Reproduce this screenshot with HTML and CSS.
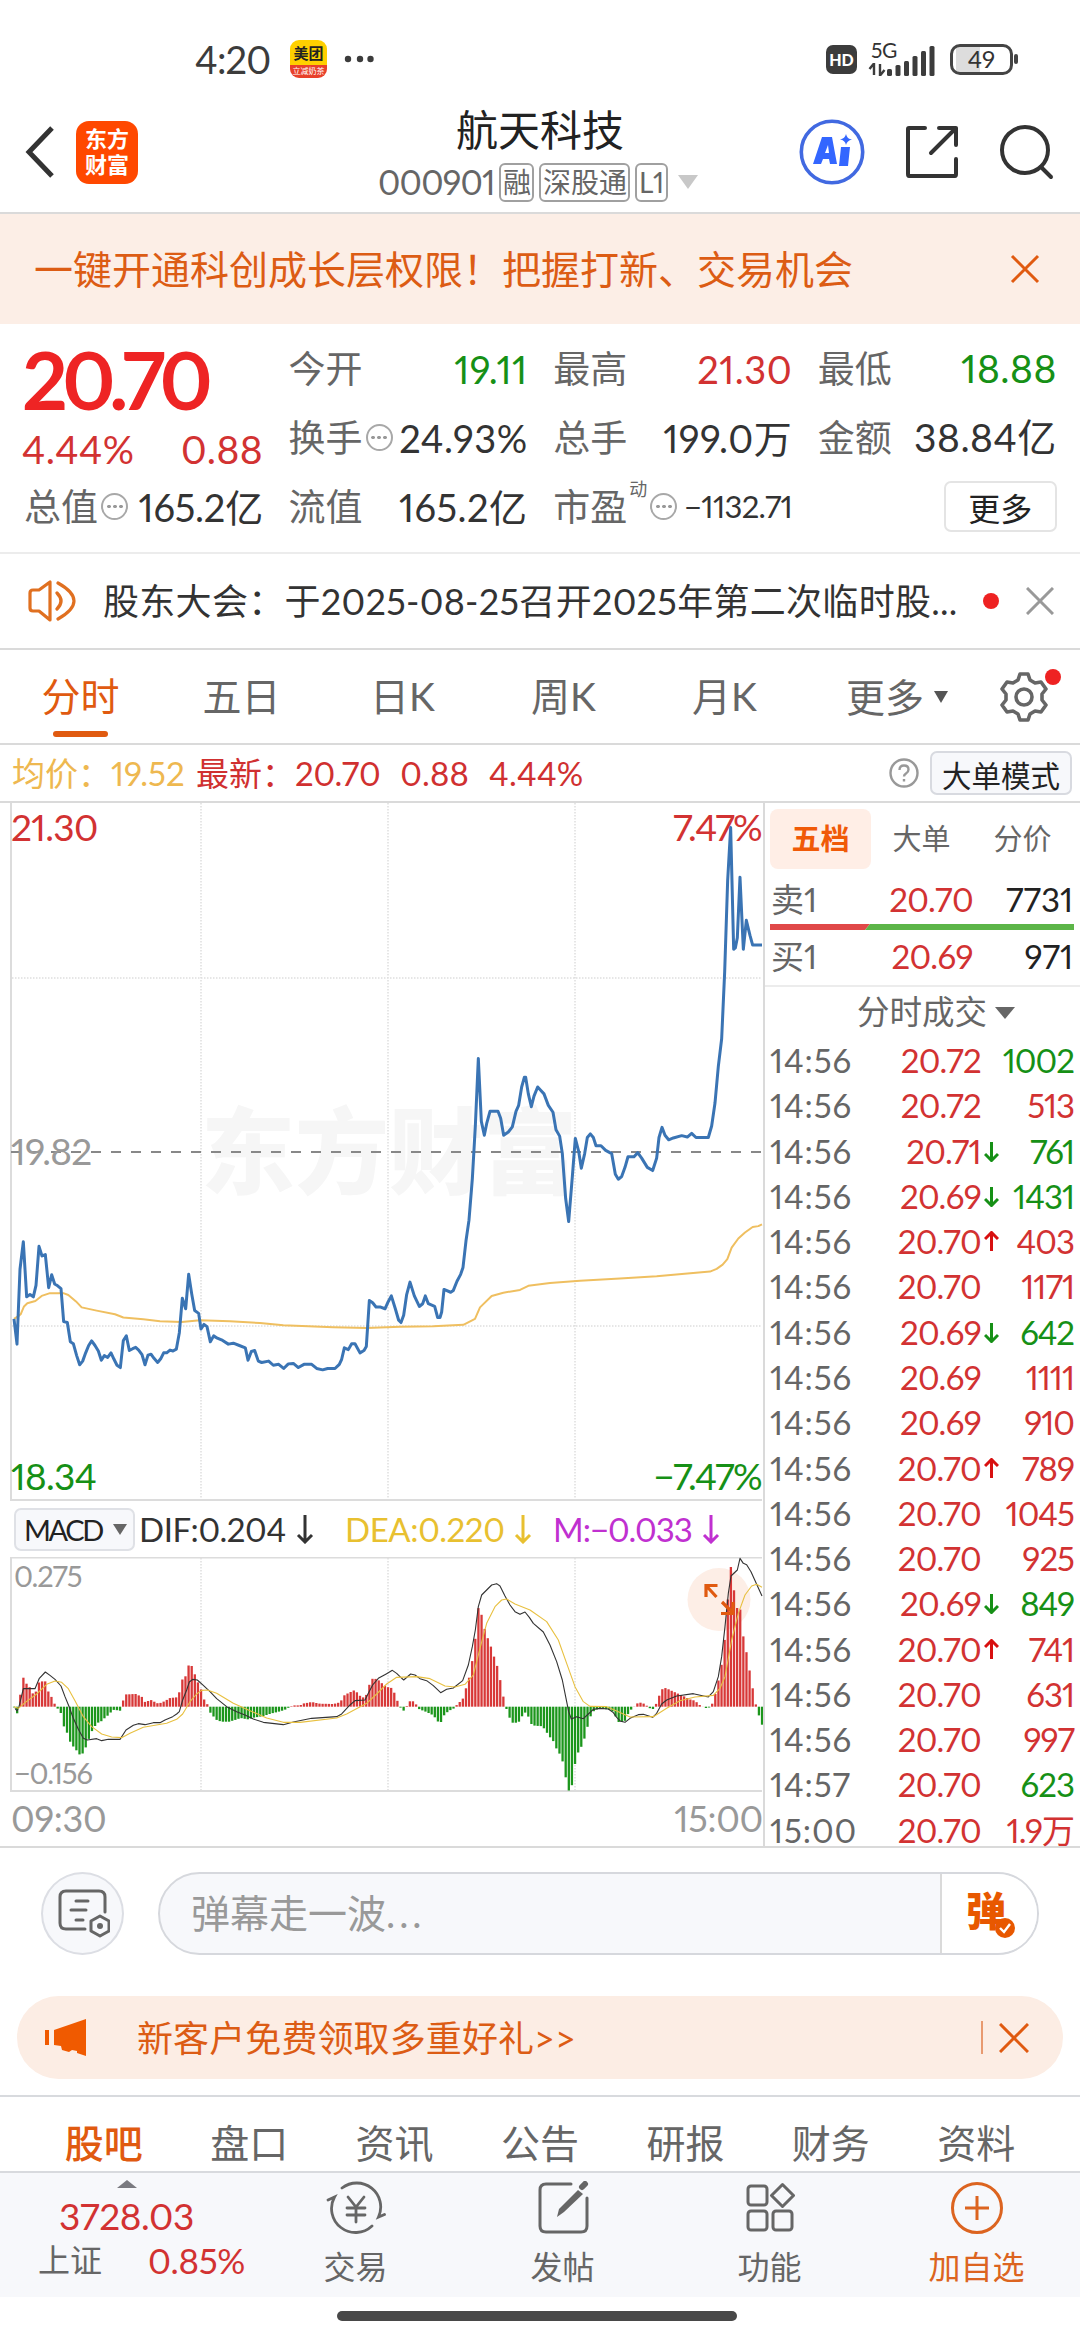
FILE: index.html
```html
<!DOCTYPE html>
<html lang="zh-CN">
<head>
  <meta charset="UTF-8" />
  <meta name="viewport" content="width=device-width, initial-scale=1.0" />
  <title>航天科技 000901</title>
  <link rel="stylesheet" href="styles.css">
</head>

<body>
  <!-- Status bar -->
  <div class="status-bar">
    <div class="status-left">
      <span class="clock">4:20</span>
      <div class="meituan"><b>美团</b><i>立减奶茶</i></div>
      <svg width="30" height="8" viewBox="0 0 30 8" fill="#3c3c3c"><circle cx="4" cy="4" r="3.2"/><circle cx="16" cy="4" r="3.2"/><circle cx="28" cy="4" r="3.2" transform="translate(-1.5 0)"/></svg>
    </div>
    <div class="status-right">
      <span class="hd">HD</span>
      <div class="signal">
        <span class="net">5G</span>
        <svg width="70" height="36" viewBox="0 0 70 36" fill="#3c3c3c">
          <path d="M6 22v12M5.500 23l-4 5M12 23v12M12.500 34l4-5" fill="none" stroke="#3c3c3c" stroke-width="2.400"/>
          <rect x="19" y="28" width="5" height="7" rx="1.500"/><rect x="27.500" y="24" width="5" height="11" rx="1.500"/><rect x="36" y="20" width="5" height="15" rx="1.500"/><rect x="44.500" y="15" width="5" height="20" rx="1.500"/><rect x="53" y="10" width="5" height="25" rx="1.500"/><rect x="61.500" y="5" width="5" height="30" rx="1.500"/>
        </svg>
      </div>
      <div class="battery"><span>49</span></div>
      <div class="battery-tip"></div>
    </div>
  </div>

  <!-- Title bar -->
  <header>
    <div class="head-left">
      <svg width="30" height="52" viewBox="0 0 30 52" fill="none" stroke="#333" stroke-width="5"><path d="M27 2 4 26l23 24"/></svg>
      <div class="app-logo">东方<br>财富</div>
    </div>
    <div class="head-title">
      <h1>航天科技</h1>
      <div class="code-line">
        <span class="code">000901</span>
        <span class="tag">融</span>
        <span class="tag">深股通</span>
        <span class="tag level-tag">L1</span>
        <svg width="20" height="14" viewBox="0 0 20 14" fill="#c8c8c8"><path d="M0 0h20L10 14z"/></svg>
      </div>
    </div>
    <div class="head-right">
      <svg width="66" height="66" viewBox="0 0 66 66">
        <circle cx="33" cy="33" r="30.700" fill="none" stroke="#4169e1" stroke-width="3.600"/>
        <path d="M23 18h10l5 27h-7l-1-5h-6l-2 5h-8zM26 34h4l-1-8z" fill="#3366ff" fill-rule="evenodd"/>
        <path d="M42 28h9l-2 19h-9zM47 15q1 5 6 5.500-5 1-6 5.500-1-5-6-5.500 5-1 6-5.500z" fill="#3366ff"/>
      </svg>
      <svg width="54" height="54" viewBox="0 0 54 54" fill="none" stroke="#333" stroke-width="4" stroke-linecap="round" stroke-linejoin="round"><path d="M20 3H4q-1 0-1 1v45q0 2 1 2h46q1 0 1-2V34M34 3h17v17M51 3 26 28"/></svg>
      <svg width="56" height="56" viewBox="0 0 56 56" fill="none" stroke="#333" stroke-width="4" stroke-linecap="round"><circle cx="26" cy="26" r="23"/><path d="m42 43 10 10"/></svg>
    </div>
  </header>

  <div class="banner">
    <span>一键开通科创成长层权限！把握打新、交易机会</span>
    <svg width="30" height="30" viewBox="0 0 30 30" stroke="#e05a10" stroke-width="3"><path d="m2 2 26 26M28 2 2 28"/></svg>
  </div>

  <!-- Quote summary -->
  <section class="quote">
    <div class="price-box">
      <div class="price">20.70</div>
      <div class="change"><span>4.44%</span><span>0.88</span></div>
    </div>
    <div class="cell"><label>今开</label><span class="num green">19.11</span></div>
    <div class="cell"><label>最高</label><span class="num red">21.30</span></div>
    <div class="cell"><label>最低</label><span class="num wide green">18.88</span></div>
    <div class="cell"><label>换手</label><i class="info"></i><span class="num">24.93%</span></div>
    <div class="cell"><label>总手</label><span class="num">199.0万</span></div>
    <div class="cell"><label>金额</label><span class="num wide">38.84亿</span></div>
    <div class="cell"><label>总值</label><i class="info"></i><span class="num tight">165.2亿</span></div>
    <div class="cell"><label>流值</label><span class="num">165.2亿</span></div>
    <div class="cell"><label>市盈</label><sup>动</sup><i class="info"></i><span class="num small">−1132.71</span></div>
    <div class="cell"><button class="more-btn">更多</button></div>
  </section>

  <div class="news">
    <svg width="48" height="42" viewBox="0 0 48 42" fill="none" stroke="#e07020" stroke-width="3.200" stroke-linecap="round" stroke-linejoin="round"><path d="M2 13q0-3 3-3h6L22 2v38l-11-9H5q-3 0-3-3zM29 13q8 8 0 16M30 3q32 18 0 36"/></svg>
    <span class="news-text">股东大会：于2025-08-25召开2025年第二次临时股...</span>
    <i class="dot"></i>
    <svg width="28" height="28" viewBox="0 0 28 28" stroke="#999" stroke-width="3"><path d="m1 1 26 26M27 1 1 27"/></svg>
  </div>

  <nav class="chart-tabs">
    <a class="active">分时</a>
    <a>五日</a>
    <a>日K</a>
    <a>周K</a>
    <a>月K</a>
    <a class="more">更多<svg width="14" height="12" viewBox="0 0 14 12" fill="#555"><path d="M0 0h14L7 12z"/></svg></a>
    <div class="gear">
      <svg width="50" height="52" viewBox="0 0 50 52" fill="none" stroke="#666" stroke-width="3.600" stroke-linejoin="round"><path d="M21 3h8l2 6 5 3 6-1 5 7-4 5v6l4 5-5 7-6-1-5 3-2 6h-8l-2-6-5-3-6 1-5-7 4-5v-6l-4-5 5-7 6 1 5-3z"/><circle cx="25" cy="26" r="8"/></svg>
      <i class="dot"></i>
    </div>
  </nav>

  <div class="latest">
    <span class="avg">均价：<b>19.52</b></span>
    <span class="last">最新：<b>20.70</b><b>0.88</b><b>4.44%</b></span>
    <svg class="help" width="30" height="30" viewBox="0 0 30 30" fill="none" stroke="#999" stroke-width="2.400"><circle cx="15" cy="15" r="13.500"/><path d="M10.500 12q0-4.500 4.500-4.500t4.500 4q0 2.500-2.500 4-2 1.200-2 3M15 21v2.500"/></svg>
    <button class="mode-btn">大单模式</button>
  </div>

  <main>
    <div class="charts">
      <!-- Intraday price -->
      <svg class="price-chart" width="763" height="698" viewBox="0 3 763 698">
        <text class="watermark" x="201" y="387">东方财富</text>
        <path class="dotted" d="M201 3v697M388 3v697M575 3v697M12 178h750M12 526h750"/>
        <path class="frame" d="M11 3v697h751"/>
        <path class="mid" d="M11 352h751"/>
        <text class="t-red" x="11" y="41">21.30</text>
        <text class="t-red end" x="761" y="41">7.47%</text>
        <text class="t-gray" x="11" y="365">19.82</text>
        <text class="t-green" x="11" y="690">18.34</text>
        <text class="t-green end" x="761" y="690">−7.47%</text>
        <g transform="scale(.33333 .45918)">
          <polyline class="avg-line" points="42,1130 55,1124 62,1120 72,1103 82,1096 106,1091 125,1080 150,1074 190,1074 205,1078 228,1092 245,1105 290,1112 345,1120 370,1127 430,1131 480,1135 545,1137 600,1133 690,1135 780,1139 850,1144 1000,1148 1100,1150 1200,1147 1300,1146 1390,1143 1425,1130 1440,1105 1475,1080 1510,1073 1560,1067 1585,1058 1650,1052 1740,1047 1860,1042 1970,1037 2130,1027 2150,1021 2168,1012 2182,1000 2195,975 2215,955 2235,942 2258,930 2275,928 2286,924"/>
          <polyline class="price-line" points="42,1130 51,1185 60,1022 70,962 80,1082 90,1077 100,1082 108,1057 117,972 126,993 136,990 146,1062 155,1034 164,1054 173,1058 183,1064 191,1136 202,1138 211,1180 220,1184 230,1210 239,1230 248,1222 257,1204 266,1188 275,1178 285,1188 295,1200 304,1220 313,1210 323,1214 333,1204 342,1218 351,1231 361,1236 370,1177 379,1167 388,1199 398,1195 407,1192 416,1198 426,1208 435,1230 444,1209 453,1207 462,1216 473,1225 482,1217 491,1204 500,1204 510,1198 519,1200 529,1196 538,1160 547,1085 557,1108 566,1033 575,1075 584,1112 596,1118 603,1152 612,1142 621,1147 631,1180 641,1167 652,1172 668,1177 685,1185 700,1183 718,1188 736,1193 744,1220 754,1201 764,1199 775,1222 785,1225 806,1222 820,1231 836,1229 851,1238 865,1228 880,1227 895,1236 912,1229 935,1229 950,1238 968,1241 983,1238 1005,1238 1018,1229 1025,1218 1033,1193 1045,1197 1055,1184 1065,1184 1080,1204 1092,1199 1099,1190 1108,1090 1118,1095 1128,1104 1140,1104 1155,1108 1165,1092 1174,1080 1186,1108 1196,1133 1203,1138 1211,1122 1220,1077 1230,1050 1243,1080 1258,1103 1268,1097 1276,1080 1285,1097 1304,1103 1313,1127 1320,1127 1325,1115 1332,1066 1352,1072 1360,1068 1371,1048 1382,1033 1389,1018 1398,960 1407,915 1417,825 1426,710 1435,563 1444,700 1453,730 1460,705 1470,678 1494,678 1502,693 1511,730 1525,723 1537,712 1548,678 1556,665 1565,625 1573,604 1577,604 1585,640 1594,668 1602,645 1613,625 1622,632 1632,640 1645,665 1659,680 1668,718 1679,732 1687,770 1697,868 1706,918 1717,820 1726,737 1736,765 1744,802 1754,770 1762,735 1771,727 1780,735 1788,753 1803,753 1817,763 1835,770 1846,815 1855,826 1865,820 1875,800 1884,777 1902,777 1913,768 1925,780 1942,800 1958,807 1970,780 1977,735 1986,713 1995,730 2006,740 2020,736 2045,731 2062,734 2075,726 2088,735 2125,735 2135,710 2145,660 2155,580 2165,520 2174,375 2183,175 2192,60 2201,325 2206,322 2212,300 2220,168 2230,325 2239,262 2250,295 2258,316 2286,316"/>
        </g>
      </svg>

      <div class="macd-head">
        <button class="macd-btn"><span>MACD</span><svg width="14" height="11" viewBox="0 0 14 11" fill="#666"><path d="M0 0h14L7 11z"/></svg></button>
        <div class="dif">DIF:0.204<svg width="18" height="30" viewBox="0 0 18 30"><path d="M9 1v27M2 21l7 7 7-7"/></svg></div>
        <div class="dea">DEA:0.220<svg width="18" height="30" viewBox="0 0 18 30"><path d="M9 1v27M2 21l7 7 7-7"/></svg></div>
        <div class="m">M:−0.033<svg width="18" height="30" viewBox="0 0 18 30"><path d="M9 1v27M2 21l7 7 7-7"/></svg></div>
      </div>

      <!-- MACD -->
      <svg class="macd-chart" width="763" height="236" viewBox="0 67 763 236">
        <circle cx="719" cy="109.500" r="31.500" fill="#fdeee6"/>
        <path class="dotted" d="M201 68v232M388 68v232M575 68v232"/>
        <path class="frame" d="M762 67.500H11v233.500h751"/>
        <text class="t-axis" x="14" y="97">0.275</text>
        <text class="t-axis" x="14" y="293.500">−0.156</text>
        <g id="bars"></g>
        <g transform="scale(.33333)">
          <polyline class="dif-line" points="45,655 51,663 57,650 70,596 105,596 118,565 136,546 150,556 165,568 183,588 195,620 208,652 220,685 235,718 250,745 262,750 290,746 305,752 325,748 360,748 378,720 400,706 415,701 435,704 460,698 480,698 495,690 518,680 530,672 538,665 548,630 560,600 568,576 578,568 592,570 610,586 630,605 650,626 680,650 710,665 735,675 760,687 790,697 850,704 880,696 935,685 1010,680 1025,672 1050,645 1065,632 1095,630 1105,610 1118,585 1135,565 1160,551 1177,541 1190,550 1200,560 1211,570 1232,552 1245,555 1260,566 1280,572 1300,587 1322,608 1340,598 1360,594 1388,572 1405,525 1417,470 1426,420 1435,350 1445,315 1460,300 1475,285 1490,281 1500,288 1515,318 1530,345 1545,365 1560,373 1575,366 1588,382 1600,400 1630,426 1650,465 1670,515 1687,570 1697,620 1706,665 1714,687 1730,680 1750,686 1765,672 1780,658 1800,655 1825,657 1840,668 1850,682 1862,694 1875,697 1890,685 1915,674 1930,673 1958,682 1970,670 1985,642 2000,630 2030,618 2080,611 2125,621 2140,605 2155,560 2165,500 2175,410 2185,310 2193,258 2212,240 2220,205 2230,220 2240,224 2253,245 2286,318"/>
          <polyline class="dea-line" points="42,650 55,655 75,638 110,612 140,583 165,573 185,577 205,596 225,632 250,680 275,710 305,732 335,741 365,743 390,730 430,712 500,700 530,688 548,672 570,635 590,612 605,601 622,600 650,610 700,640 750,662 800,684 850,697 900,697 1010,684 1040,672 1100,640 1130,612 1160,582 1190,562 1250,560 1290,566 1335,588 1365,591 1395,583 1420,555 1440,475 1460,400 1485,350 1505,330 1520,327 1545,342 1590,360 1640,395 1675,450 1700,520 1725,590 1750,635 1770,649 1820,650 1850,663 1890,681 1960,680 2000,655 2040,632 2085,621 2140,616 2160,595 2175,560 2195,450 2215,370 2235,315 2255,288 2270,283 2286,292"/>
        </g>
        <path d="M717.500 95.500H706V107M706 95.500 716.500 107M722 112l11 11M733 112v11.500H721" fill="none" stroke="#e05a10" stroke-width="3.200"/>
      </svg>

      <div class="times"><span>09:30</span><span>15:00</span></div>
    </div>

    <aside class="book">
      <div class="book-tabs"><span class="active">五档</span><span>大单</span><span>分价</span></div>
      <div class="level"><span>卖1</span><span class="red">20.70</span><span class="vol">7731</span></div>
      <svg class="ratio" width="304" height="6" viewBox="0 0 304 6"><path d="M0 0h100l-5 6H0z" fill="#e04848"/><path d="M100 0h204v6H95z" fill="#5cb548"/></svg>
      <div class="level buy"><span>买1</span><span class="red">20.69</span><span class="vol">971</span></div>
      <div class="book-title">分时成交<svg width="20" height="12" viewBox="0 0 20 12" fill="#666"><path d="M0 0h20L10 12z"/></svg></div>
      <div class="ticks" id="ticks"></div>
    </aside>
  </main>

  <!-- Comment input -->
  <div class="barrage">
    <div class="round-btn">
      <svg width="52" height="50" viewBox="0 0 52 50" fill="none" stroke="#666" stroke-width="3" stroke-linecap="round"><path d="M47 23V8q0-6-6-6H8Q2 2 2 8v26q0 6 6 6h19M18 12h12M13 21h15M18 31h7"/><path d="m42 27 9 5v10l-9 5-9-5V32z" stroke-linejoin="round"/><circle cx="42" cy="37" r="3" fill="#666" stroke="none"/></svg>
    </div>
    <div class="barrage-input">
      <div>弹幕走一波<span class="dots">...</span></div>
      <div class="send">
        <b>弹</b>
        <svg class="send-check" width="20" height="20" viewBox="0 0 20 20"><circle cx="10" cy="10" r="10" fill="#e85800"/><path d="m5 10 4 4 6-8" fill="none" stroke="#fff" stroke-width="2.400"/></svg>
      </div>
    </div>
  </div>

  <div class="promo">
    <svg width="42" height="37" viewBox="0 0 42 37" fill="#f05a00"><path d="M0 11h4v15H0zM9 11 41 0v37l-9-3v-2l-5-1-3 2-7-2-1-4-7-1z"/></svg>
    <span class="promo-text">新客户免费领取多重好礼&gt;&gt;</span>
    <i class="bar"></i>
    <svg width="30" height="30" viewBox="0 0 30 30" stroke="#e05a10" stroke-width="3"><path d="m1 1 28 28M29 1 1 29"/></svg>
  </div>

  <nav class="info-tabs">
    <a class="active">股吧</a><a>盘口</a><a>资讯</a><a>公告</a><a>研报</a><a>财务</a><a>资料</a>
  </nav>

  <footer>
    <div class="index">
      <svg width="20" height="8" viewBox="0 0 20 8" fill="#7a7a80"><path d="M0 8 10 0l10 8z"/></svg>
      <div class="index-value">3728.03</div>
      <div class="index-line"><span>上证</span><span class="red">0.85%</span></div>
    </div>
    <a>
      <svg width="60" height="54" viewBox="0 0 60 54" fill="none" stroke="#666" stroke-width="2.800" stroke-linecap="round"><path d="M16 7A24 24 0 0 1 52.500 36l6-2.500M46 45A24 24 0 0 1 8.500 16L2 19"/><path d="m22 16 8 10 8-10M30 26v15M21 27h18M21 34h18"/></svg>
      交易
    </a>
    <a>
      <svg width="52" height="54" viewBox="0 0 52 54" fill="none" stroke="#666" stroke-width="3" stroke-linecap="round"><path d="M34 3H9Q3 3 3 9v36q0 6 6 6h35q6 0 6-6V17"/><path d="m20 36 2-8L41 9l5 4-19 18z" fill="#666" stroke="none"/><path d="m45 6 3-3" stroke-width="6"/></svg>
      发帖
    </a>
    <a>
      <svg width="50" height="50" viewBox="0 0 50 50" fill="none" stroke="#666" stroke-width="3"><rect x="3" y="3" width="19" height="19" rx="3"/><rect x="3" y="28" width="19" height="19" rx="3"/><rect x="28" y="28" width="19" height="19" rx="3"/><path d="m37.500 1.500 11 11-11 11-11-11z" stroke-linejoin="round"/></svg>
      功能
    </a>
    <a class="active">
      <svg width="54" height="54" viewBox="0 0 54 54" fill="none" stroke="#dc6420" stroke-width="3"><circle cx="27" cy="27" r="24.500"/><path d="M27 15v24M15 27h24"/></svg>
      加自选
    </a>
  </footer>

  <div class="home-bar"></div>

  <script src="app.js"></script>
</body>
</html>
```

FILE: styles.css
```css
/* === Basic Reset === */
* {
  margin: 0;
  padding: 0;
  box-sizing: border-box;
}

body {
  width: 1080px;
  height: 2340px;
  overflow: hidden;
  font-family: 'Lato', 'Noto Sans CJK SC', sans-serif;
  font-variant-numeric: proportional-nums;
  background: #fff;
  color: #333;
  line-height: 1;
}

svg {
  display: block;
  flex: none;
}

i {
  font-style: normal;
}

button {
  font-family: inherit;
  background: none;
  border: none;
  color: #222;
}

.red {
  color: #d23232;
}

.green {
  color: #169016;
}

.dot {
  width: 16px;
  height: 16px;
  border-radius: 50%;
  background: #ee2222;
  flex: none;
}

/* === Status bar === */
.status-bar {
  height: 118px;
  padding: 0 62px 0 195px;
  display: flex;
  justify-content: space-between;
  align-items: center;
}

.status-left,
.status-right {
  display: flex;
  align-items: center;
}

.clock {
  font-size: 38px;
  width: 95px;
  letter-spacing: -0.8px;
  color: #3c3c3c;
}

.meituan {
  width: 37px;
  height: 38px;
  border-radius: 9px;
  background: linear-gradient(#ffd000 66%, #e8402a 66%);
  margin-right: 17px;
  text-align: center;
  overflow: hidden;
}

.meituan b {
  display: block;
  font-size: 15px;
  line-height: 27px;
  color: #222;
}

.meituan i {
  display: block;
  font-size: 8px;
  line-height: 9px;
  color: #fff;
}

.hd {
  width: 31px;
  height: 29px;
  border-radius: 7px;
  background: #3c3c3c;
  color: #fff;
  font-size: 16px;
  font-weight: 900;
  line-height: 29px;
  text-align: center;
  margin-right: 11px;
}

.signal {
  position: relative;
  height: 36px;
  margin-right: 12px;
}

.net {
  position: absolute;
  left: 3px;
  top: 0;
  font-size: 21px;
  line-height: 18px;
  letter-spacing: -0.5px;
}

.battery {
  width: 63px;
  height: 31px;
  border: 3.5px solid #444;
  border-radius: 10px;
  background: linear-gradient(90deg, #fff 3px, #ddd 3px, #ddd 27px, #fff 27px) no-repeat;
  font-size: 24px;
  line-height: 23px;
  text-align: center;
}

.battery-tip {
  width: 4px;
  height: 10px;
  margin-left: 1px;
  border-radius: 2px;
  background: #444;
}

/* === Header === */
header {
  height: 96px;
  padding: 0 25px 0 25px;
  display: grid;
  grid-template-columns: 1fr 440px 1fr;
  border-bottom: 2px solid #dadada;
}

.head-left {
  display: flex;
  align-items: center;
  height: 68px;
  gap: 21px;
}

.app-logo {
  width: 62px;
  height: 63px;
  border-radius: 13px;
  background: #ff4800;
  color: #fff;
  font-size: 22px;
  font-weight: 700;
  line-height: 26px;
  padding-top: 5px;
  text-align: center;
}

.head-title {
  margin: -10px -8px 0 8px;
}

.head-title h1 {
  font-size: 42px;
  font-weight: 400;
  line-height: 44px;
  text-align: center;
  margin-left: -16px;
  color: #222;
}

.code-line {
  display: flex;
  align-items: center;
  height: 60px;
  gap: 5px;
  padding-left: 50px;
  color: #666;
}

.code {
  font-size: 34px;
  width: 116px;
  letter-spacing: -0.8px;
}

.tag {
  height: 39px;
  padding: 0 1px 0 2px;
  border: 2px solid #a0a0a0;
  border-radius: 6px;
  font-size: 28px;
  line-height: 35px;
}

.level-tag {
  padding: 0 2px;
  letter-spacing: -0.5px;
}

.code-line svg {
  margin-left: 5px;
}

.head-right {
  display: flex;
  align-items: center;
  justify-content: flex-end;
  height: 68px;
  gap: 40px;
}

/* === Banner === */
.banner {
  height: 110px;
  padding: 0 40px 0 34px;
  background: #fceee6;
  color: #dc5c14;
  display: flex;
  justify-content: space-between;
  align-items: center;
  font-size: 39px;
}

/* === Quote === */
.quote {
  height: 230px;
  padding: 10px 23px 0 24px;
  display: grid;
  grid-template-columns: repeat(4, 239px);
  grid-template-rows: repeat(3, 69px);
  column-gap: 25.6px;
  border-bottom: 2px solid #ececec;
}

.price-box {
  grid-row: span 2;
}

.price {
  margin-left: -2px;
  font-size: 80px;
  font-weight: 700;
  line-height: 90px;
  letter-spacing: -5.7px;
  color: #ee2424;
}

.change {
  display: flex;
  justify-content: space-between;
  margin-left: -2px;
  font-size: 39px;
  line-height: 50px;
  letter-spacing: 0.4px;
  color: #d23232;
}

.cell {
  display: flex;
  align-items: center;
  font-size: 37px;
  white-space: nowrap;
}

.cell label {
  color: #666;
}

.cell .num {
  margin-left: auto;
  font-size: 38px;
  letter-spacing: 0.5px;
}

.cell .num.wide {
  font-size: 39px;
}

.cell .num.tight {
  letter-spacing: -0.2px;
}

.cell .num.small {
  font-size: 31px;
  letter-spacing: -0.7px;
}

.cell sup {
  align-self: flex-start;
  font-size: 18px;
  margin: 8px 0 0 2px;
  color: #666;
}

.info {
  width: 27px;
  height: 27px;
  margin-left: 3px;
  border: 2px solid #a8a8a8;
  border-radius: 50%;
  background: radial-gradient(circle, #999 1.6px, transparent 2px) center / 6px 23px repeat-x;
  background-origin: content-box;
  background-clip: content-box;
  padding: 0 2.5px;
  flex: none;
}

.more-btn {
  width: 113px;
  height: 51px;
  margin-left: auto;
  border: 2px solid #e4e4e4;
  border-radius: 7px;
  font-size: 32px;
}

/* === News === */
.news {
  height: 96px;
  padding: 0 28px;
  display: flex;
  align-items: center;
  border-bottom: 2px solid #dadada;
}

.news-text {
  width: 880px;
  padding-left: 27px;
  font-size: 36px;
  letter-spacing: 0.3px;
  white-space: nowrap;
}

.news .dot {
  margin: 0 27px 0 27px;
}

/* === Chart tabs === */
.chart-tabs {
  height: 95px;
  display: flex;
  border-bottom: 2px solid #dadada;
}

.chart-tabs a {
  width: 161px;
  font-size: 39px;
  line-height: 92px;
  text-align: center;
  color: #666;
}

.chart-tabs a.active {
  color: #e05a10;
}

.chart-tabs a.active::after {
  content: '';
  display: block;
  width: 55px;
  height: 6px;
  margin: -11px auto 0;
  border-radius: 3px;
  background: #e05a10;
}

.chart-tabs a.more {
  width: 194px;
  padding-left: 41px;
  display: flex;
  align-items: center;
  gap: 10px;
}

.gear {
  position: relative;
  padding-top: 21px;
}

.gear .dot {
  position: absolute;
  right: -12px;
  top: 19px;
}

/* === Latest price row === */
.latest {
  height: 58px;
  padding: 0 8px 0 12px;
  display: flex;
  align-items: center;
  font-size: 33px;
  border-bottom: 2px solid #dadada;
}

.latest b {
  font-weight: 400;
  letter-spacing: -0.3px;
}

.latest .avg b {
  letter-spacing: 0;
}

.avg {
  width: 184px;
  color: #eeb850;
}

.last {
  color: #d03030;
}

.last b + b {
  margin-left: 20px;
  letter-spacing: 0.2px;
}

.help {
  margin-left: auto;
}

.mode-btn {
  width: 142px;
  height: 44px;
  margin-left: 11px;
  border: 2px solid #d8dae0;
  border-radius: 7px;
  background: #f7f8fb;
  font-size: 29.5px;
}

/* === Charts === */
main {
  height: 1045px;
  display: flex;
  border-bottom: 2px solid #dadada;
}

.charts {
  width: 763px;
}

.price-chart text,
.macd-chart text {
  font-size: 37px;
  letter-spacing: -0.7px;
}

.price-chart .watermark {
  font-size: 94px;
  font-weight: 900;
  letter-spacing: 0;
  fill: #f6f6f6;
}

.price-chart .end {
  text-anchor: end;
  letter-spacing: -1.7px;
}

.t-red {
  fill: #d23232;
}

.t-green {
  fill: #169016;
}

.t-gray {
  fill: #999;
}

.macd-chart .t-axis {
  font-size: 29px;
  letter-spacing: -1.2px;
  fill: #999;
}

.dotted {
  stroke: #dedede;
  stroke-width: 1.5;
  stroke-dasharray: 1.5 1.5;
}

.frame {
  fill: none;
  stroke: #dcdcdc;
  stroke-width: 2;
}

.mid {
  stroke: #888;
  stroke-width: 2;
  stroke-dasharray: 10 10;
}

polyline {
  fill: none;
  stroke-linejoin: round;
  vector-effect: non-scaling-stroke;
}

.price-line {
  stroke: #3a74b4;
  stroke-width: 3;
}

.avg-line {
  stroke: #efbf60;
  stroke-width: 2;
}

.dif-line {
  stroke: #333;
  stroke-width: 1.1;
}

.dea-line {
  stroke: #e8c040;
  stroke-width: 1.1;
}

.macd-head {
  height: 56px;
  padding-left: 14px;
  display: flex;
  align-items: center;
  font-size: 33px;
}

.macd-head div {
  display: flex;
  align-items: center;
  gap: 10px;
}

.macd-head div svg {
  fill: none;
  stroke: currentColor;
  stroke-width: 3;
}

.macd-btn {
  width: 121px;
  height: 43px;
  margin-right: 4px;
  padding-left: 8px;
  display: flex;
  align-items: center;
  border: 2px solid #dfe1e6;
  border-radius: 7px;
  background: #f7f8fb;
  font-size: 29px;
  letter-spacing: -2.4px;
}

.macd-btn span {
  width: 89px;
  text-align: left;
}

.dif {
  width: 206px;
  letter-spacing: -0.4px;
}

.dea {
  width: 208px;
  letter-spacing: -0.4px;
  color: #e8c030;
}

.m {
  letter-spacing: -1px;
  color: #c030d0;
}

.times {
  display: flex;
  justify-content: space-between;
  padding-left: 11px;
  font-size: 36px;
  line-height: 51px;
  letter-spacing: -0.3px;
  color: #999;
}

/* === Order book === */
.book {
  flex: 1;
  border-left: 2px solid #dadada;
}

.book-tabs {
  display: flex;
  padding: 6px 7px 0 5px;
  height: 74px;
}

.book-tabs span {
  width: 101px;
  height: 60px;
  border-radius: 8px;
  font-size: 29px;
  line-height: 60px;
  text-align: center;
  color: #666;
}

.book-tabs .active {
  background: #ffeee6;
  color: #f05a08;
  font-weight: 700;
}

.level {
  display: grid;
  grid-template-columns: 60px 142px 1fr;
  height: 47px;
  line-height: 44px;
  padding: 0 7px 0 6px;
  font-size: 33px;
  color: #666;
}

.level.buy {
  line-height: 52px;
}

.level span + span {
  text-align: right;
}

.level .red {
  letter-spacing: -0.6px;
}

.level .vol {
  color: #222;
}

.ratio {
  margin-left: 5px;
}

.book-title {
  height: 53px;
  margin-top: 8px;
  padding-left: 92px;
  border-top: 2px solid #ececec;
  display: flex;
  align-items: center;
  gap: 8px;
  font-size: 32.5px;
  color: #666;
}

.tick {
  height: 45.28px;
  padding: 0 6px 0 5px;
  display: grid;
  grid-template-columns: 80px 131px 18px 1fr;
  align-items: center;
  font-size: 33px;
  letter-spacing: 0.9px;
  white-space: nowrap;
  color: #666;
}

.tick .red {
  letter-spacing: -0.7px;
}

.tick span:last-child {
  letter-spacing: -1px;
}

.tick span + span,
.tick svg + span {
  text-align: right;
}

.tick svg {
  margin-left: 3px;
  fill: none;
  stroke-width: 3;
}

/* === Comment input === */
.barrage {
  height: 148px;
  padding: 24px 41px 0;
  display: flex;
  gap: 34px;
}

.round-btn {
  width: 83px;
  height: 83px;
  border: 2px solid #dcdee4;
  border-radius: 50%;
  background: #f7f8fb;
  display: flex;
  align-items: center;
  padding-left: 15px;
}

.barrage-input {
  width: 882px;
  height: 83px;
  border: 2px solid #d6d8dd;
  border-radius: 42px;
  background: #f7f8fb;
  overflow: hidden;
  display: flex;
  justify-content: space-between;
  align-items: center;
  padding-left: 31px;
  font-size: 39px;
  color: #999;
}

.dots {
  letter-spacing: 4px;
}

.send {
  position: relative;
  width: 97px;
  height: 79px;
  border-left: 2px solid #dadada;
  background: #fff;
}

.send b {
  display: block;
  padding-left: 24px;
  font-size: 40px;
  font-weight: 900;
  line-height: 75px;
  color: #e85800;
}

.send-check {
  position: absolute;
  left: 53px;
  top: 44px;
}

/* === Promo === */
.promo {
  height: 83px;
  margin: 0 17px 0;
  padding: 0 34px 0 28px;
  border-radius: 42px;
  background: #fcede4;
  color: #dc5c14;
  display: flex;
  align-items: center;
}

.promo-text {
  margin-left: 50px;
  font-size: 36px;
  letter-spacing: 0.1px;
}

.promo .bar {
  width: 2px;
  height: 33px;
  margin: 0 16px 0 auto;
  background: #e89a70;
}

/* === Info tabs === */
.info-tabs {
  height: 76px;
  margin-top: 16px;
  padding: 0 31px;
  display: grid;
  grid-template-columns: repeat(7, 1fr);
  border-top: 2px solid #d8dade;
  font-size: 39px;
  line-height: 93px;
  text-align: center;
  color: #666;
}

.info-tabs .active {
  color: #e05a10;
  font-weight: 500;
}

/* === Bottom bar === */
footer {
  height: 126px;
  border-top: 2px solid #d8dade;
  background: #f7f8fb;
  display: grid;
  grid-template-columns: 252px repeat(4, 207px);
}

.index {
  padding-top: 7px;
}

.index svg {
  margin-left: 117px;
}

.index-value {
  margin-top: 6px;
  padding-left: 59px;
  font-size: 37px;
  line-height: 44px;
  letter-spacing: -0.4px;
  color: #d23232;
}

.index-line {
  display: flex;
  gap: 46px;
  padding-left: 38px;
  font-size: 32px;
  line-height: 44px;
  color: #666;
}

.index-line .red {
  font-size: 35px;
  letter-spacing: -0.3px;
}

footer a {
  display: flex;
  flex-direction: column;
  align-items: center;
  font-size: 32px;
  line-height: 44px;
  color: #666;
}

footer a svg {
  height: 54px;
  margin: 8px 0 10px;
}

footer a.active {
  color: #dc6420;
}

.home-bar {
  width: 400px;
  height: 10px;
  margin: 14px 0 0 337px;
  border-radius: 5px;
  background: #484848;
}
```

FILE: app.js
```js
// time, price, direction, volume, volume color
const ticks = [
  ['14:56', '20.72', '', '1002', 'green'],
  ['14:56', '20.72', '', '513', 'red'],
  ['14:56', '20.71', 'down', '761', 'green'],
  ['14:56', '20.69', 'down', '1431', 'green'],
  ['14:56', '20.70', 'up', '403', 'red'],
  ['14:56', '20.70', '', '1171', 'red'],
  ['14:56', '20.69', 'down', '642', 'green'],
  ['14:56', '20.69', '', '1111', 'red'],
  ['14:56', '20.69', '', '910', 'red'],
  ['14:56', '20.70', 'up', '789', 'red'],
  ['14:56', '20.70', '', '1045', 'red'],
  ['14:56', '20.70', '', '925', 'red'],
  ['14:56', '20.69', 'down', '849', 'green'],
  ['14:56', '20.70', 'up', '741', 'red'],
  ['14:56', '20.70', '', '631', 'red'],
  ['14:56', '20.70', '', '997', 'red'],
  ['14:57', '20.70', '', '623', 'green'],
  ['15:00', '20.70', '', '1.9万', 'red']
];

const arrows = {
  '': '',
  up: '<path d="M7.500 20V2M1 8l6.500-6.500L14 8" stroke="#d81010"/>',
  down: '<path d="M7.500 1v18M1 13l6.500 6.500L14 13" stroke="#169016"/>'
};

document.getElementById('ticks').innerHTML = ticks.map(t => `
  <div class="tick"><span>${t[0]}</span><span class="red">${t[1]}</span>
  <svg width="15" height="21" viewBox="0 0 15 21">${arrows[t[2]]}</svg>
  <span class="${t[4]}">${t[3]}</span></div>`).join('');

// MACD histogram: [x, value] knots, one bar per minute in between
const knots = [
  [42,-2],[51,-22],[60,32],[70,87],[80,68],[90,57],[98,40],[106,40],[115,72],[125,76],[136,76],[145,45],[155,28],[164,8],[173,-6],[183,-20],
  [191,-58],[201,-78],[211,-107],[220,-120],[230,-132],[239,-144],[249,-140],[258,-120],[268,-92],[277,-70],[287,-55],[296,-46],[305,-43],
  [315,-33],[325,-25],[334,-15],[342,-9],[360,-12],[367,14],[378,37],[407,38],[425,30],[435,14],[453,20],[473,10],[485,12],[510,26],[529,28],
  [538,44],[547,82],[557,92],[566,125],[575,122],[584,98],[594,72],[603,52],[612,22],[622,7],[631,-18],[641,-30],[652,-42],[668,-45],[687,-45],
  [705,-40],[722,-34],[744,-38],[760,-33],[790,-28],[815,-20],[840,-14],[860,-7],[868,-1],[880,4],[900,4],[912,10],[935,14],[960,9],[1000,8],
  [1015,12],[1025,20],[1033,34],[1045,41],[1062,49],[1072,42],[1082,30],[1092,27],[1099,36],[1108,66],[1118,85],[1128,83],[1140,77],[1150,65],
  [1165,58],[1175,56],[1185,38],[1193,15],[1202,-4],[1211,-12],[1220,2],[1230,17],[1240,16],[1249,6],[1258,-8],[1280,-16],[1300,-26],[1313,-44],
  [1322,-48],[1332,-26],[1345,-13],[1360,-6],[1370,5],[1380,15],[1390,26],[1399,60],[1408,90],[1417,140],[1426,205],[1435,296],[1444,278],
  [1453,236],[1463,206],[1472,182],[1482,150],[1492,120],[1501,78],[1510,30],[1519,-6],[1528,-32],[1538,-48],[1555,-48],[1565,-30],[1576,-17],
  [1585,-30],[1594,-52],[1604,-57],[1622,-58],[1632,-65],[1642,-80],[1651,-93],[1661,-105],[1670,-128],[1679,-142],[1688,-165],[1697,-212],
  [1706,-252],[1716,-235],[1725,-172],[1735,-135],[1745,-118],[1754,-93],[1763,-58],[1772,-28],[1782,-12],[1795,-6],[1825,-8],[1840,-16],
  [1855,-46],[1865,-46],[1875,-42],[1884,-22],[1893,-9],[1902,0],[1912,10],[1922,12],[1935,8],[1947,-4],[1959,-7],[1968,8],[1977,32],[1987,53],
  [1997,56],[2010,50],[2032,40],[2050,32],[2070,22],[2085,18],[2097,6],[2107,1],[2118,-4],[2130,-2],[2137,10],[2145,35],[2155,78],[2164,122],
  [2174,202],[2183,320],[2192,423],[2201,354],[2211,296],[2220,296],[2230,210],[2239,165],[2248,112],[2258,55],[2267,8],[2276,-24],[2286,-54]
];

const zero = 216.7;
let bars = '';
for (let i = 0; i <= 240; i++) {
  const x = 42 + i * 9.35;
  let k = 0;
  while (k < knots.length - 2 && knots[k + 1][0] < x) k++;
  const [x0, v0] = knots[k];
  const [x1, v1] = knots[k + 1];
  const v = (v0 + (v1 - v0) * (x - x0) / (x1 - x0)) / 3;
  const top = v > 0 ? zero - v : zero;
  bars += `<rect x="${(x / 3 - 1.1).toFixed(2)}" y="${top.toFixed(1)}" width="2.3" height="${Math.abs(v).toFixed(1)}" fill="${v > 0 ? '#d83838' : '#1c961c'}"/>`;
}
document.getElementById('bars').innerHTML = bars;
```
